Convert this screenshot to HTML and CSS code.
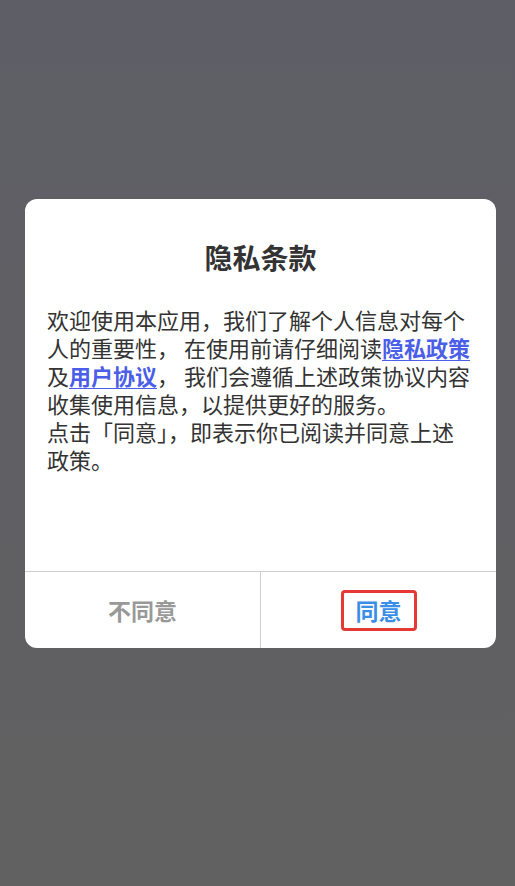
FILE: index.html
```html
<!DOCTYPE html>
<html lang="zh-CN">
<head>
<meta charset="utf-8">
<title>隐私条款</title>
<link rel="stylesheet" href="styles.css">
</head>
<body>
<div class="overlay">
  <div class="dialog">
    <div class="dialog-body">
      <h1 class="dialog-title">隐私条款</h1>
      <p class="dialog-text">欢迎使用本应用，我们了解个人信息对每个人的重要性， 在使用前请仔细阅读<a class="link" href="#">隐私政策</a>及<a class="link" href="#">用户协议</a>， 我们会遵循上述政策协议内容收集使用信息，以提供更好的服务。<br>点击「同意」，即表示你已阅读并同意上述政策。</p>
    </div>
    <div class="dialog-actions">
      <button class="action action-cancel">不同意</button>
      <button class="action action-ok"><span class="ok-box">同意</span></button>
    </div>
  </div>
</div>
</body>
</html>
```
FILE: styles.css
```css
* { box-sizing: border-box; }
html, body { margin: 0; padding: 0; height: 100%; }
body {
  font-family: "Noto Sans CJK SC", "Noto Sans", sans-serif;
  background: linear-gradient(to bottom, #5e5e66, #616161);
}
.overlay {
  height: 886px;
  padding-top: 199px;
  padding-left: 25px;
  padding-right: 19px;
}
.dialog {
  background: #fff;
  border-radius: 12px;
  width: 471px;
  overflow: hidden;
}
.dialog-body {
  height: 372px;
  padding: 38px 22px 0 22px;
}
.dialog-title {
  margin: 0;
  text-align: center;
  font-size: 28px;
  line-height: 40px;
  font-weight: 700;
  color: #333;
}
.dialog-text {
  margin: 28px 0 0 0;
  font-size: 22px;
  line-height: 28px;
  color: #333;
}
.link {
  display: inline-block;
  line-height: 28px;
  color: #4a5ee8;
  font-weight: 700;
  text-decoration: underline;
  text-decoration-thickness: 1px;
  text-underline-offset: 3px;
}
.dialog-actions {
  display: flex;
  border-top: 1px solid #cfcfcf;
  height: 77px;
}
.action {
  flex: 1;
  border: 0;
  background: transparent;
  font-family: inherit;
  font-size: 23px;
  font-weight: 700;
  display: flex;
  align-items: center;
  justify-content: center;
  padding: 0;
}
.action-cancel {
  color: #999;
  border-right: 1px solid #cfcfcf;
}
.action-ok {
  color: #3a8ee6;
}
.ok-box {
  display: inline-block;
  border: 3px solid #e53935;
  border-radius: 4px;
  padding: 1px 12px;
  line-height: 33px;
}
```
